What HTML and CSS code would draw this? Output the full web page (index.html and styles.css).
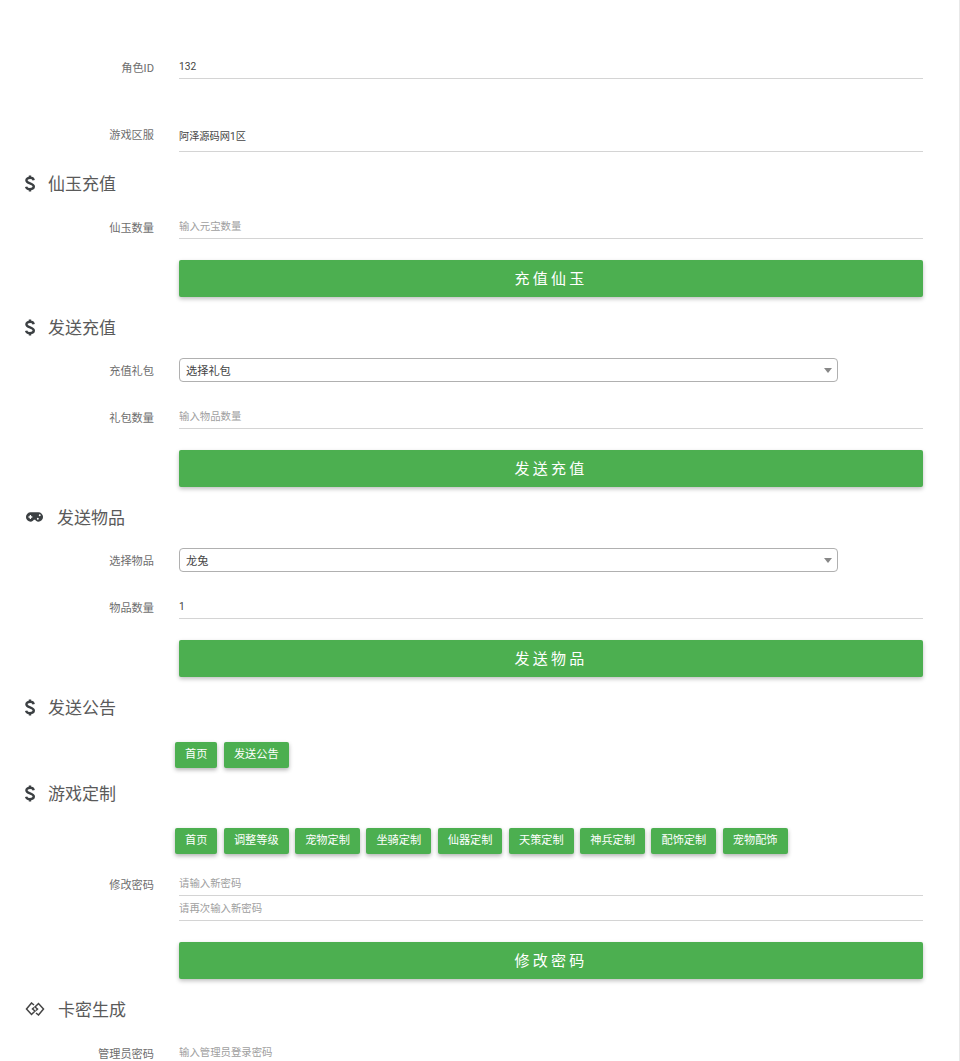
FILE: index.html
```html
<!DOCTYPE html>
<html lang="zh">
<head>
<meta charset="utf-8">
<title>GM</title>
<link rel="stylesheet" href="styles.css">
</head>
<body>
<svg class="defs" aria-hidden="true"><defs><symbol id="dollar" viewBox="0 0 10 17"><path d="M8.700 5.200C8.400 3.500 7 2.800 5 2.800 3 2.800 1.400 3.700 1.400 5.200c0 3.700 7.400 2.500 7.400 6.400 0 1.700-1.700 2.600-3.800 2.600-2.100 0-3.600-.8-3.900-2.500M5 .5v2.300M5 14.200v2.300"/></symbol></defs></svg>
<main class="page">
  <div class="row row-first"><label class="lbl">角色ID</label><div class="field"><span class="val">132</span></div></div>
  <div class="row row-zone"><label class="lbl">游戏区服</label><div class="field tall"><span class="val">阿泽源码网1区</span></div></div>

  <h3 class="head"><svg class="ic ic-dollar"><use href="#dollar"/></svg><span>仙玉充值</span></h3>
  <div class="row"><label class="lbl">仙玉数量</label><div class="field"><span class="ph">输入元宝数量</span></div></div>
  <button class="btn-wide">充值仙玉</button>

  <h3 class="head"><svg class="ic ic-dollar"><use href="#dollar"/></svg><span>发送充值</span></h3>
  <div class="row-select"><label class="lbl">充值礼包</label><div class="select"><span>选择礼包</span><i class="caret"></i></div></div>
  <div class="row row-after"><label class="lbl">礼包数量</label><div class="field"><span class="ph">输入物品数量</span></div></div>
  <button class="btn-wide">发送充值</button>

  <h3 class="head"><svg class="ic ic-pad" viewBox="0 0 20 12"><path fill-rule="evenodd" d="M6 1h8a5 5 0 0 1 0 10c-1.700 0-2.500-1-3.300-2H9.300C8.500 10 7.700 11 6 11A5 5 0 0 1 6 1zM5 4v1.300H3.700v1.400H5V8h1.400V6.700h1.300V5.300H6.400V4zm8.500 2.800a1 1 0 1 0 0 2 1 1 0 0 0 0-2zm2-3.600a1 1 0 1 0 0 2 1 1 0 0 0 0-2z"/></svg><span>发送物品</span></h3>
  <div class="row-select"><label class="lbl">选择物品</label><div class="select"><span>龙兔</span><i class="caret"></i></div></div>
  <div class="row row-after"><label class="lbl">物品数量</label><div class="field"><span class="val">1</span></div></div>
  <button class="btn-wide">发送物品</button>

  <h3 class="head"><svg class="ic ic-dollar"><use href="#dollar"/></svg><span>发送公告</span></h3>
  <nav class="btns"><a class="btn">首页</a><a class="btn">发送公告</a></nav>

  <h3 class="head head-tight"><svg class="ic ic-dollar"><use href="#dollar"/></svg><span>游戏定制</span></h3>
  <nav class="btns"><a class="btn">首页</a><a class="btn">调整等级</a><a class="btn">宠物定制</a><a class="btn">坐骑定制</a><a class="btn">仙器定制</a><a class="btn">天策定制</a><a class="btn">神兵定制</a><a class="btn">配饰定制</a><a class="btn">宠物配饰</a></nav>

  <div class="row row-pw"><label class="lbl">修改密码</label><div class="stack"><div class="field"><span class="ph">请输入新密码</span></div><div class="field"><span class="ph">请再次输入新密码</span></div></div></div>
  <button class="btn-wide">修改密码</button>

  <h3 class="head"><svg class="ic ic-link" viewBox="0 0 20 14"><path d="M9 3L6.500 1 1.500 7l5 5.500 3.500-3.500L7.500 7 9 5.500M11 11l2.500 2 5-6-5-5.500L10 5l2.500 2L11 8.500"/></svg><span>卡密生成</span></h3>
  <div class="row"><label class="lbl">管理员密码</label><div class="field"><span class="ph">输入管理员登录密码</span></div></div>
</main>
</body>
</html>
```
FILE: styles.css
```css
html, body { margin: 0; padding: 0; height: 1061px; overflow: hidden; background: #fff; }
body { font-family: Roboto, "Noto Sans CJK SC", sans-serif; color: #555; font-size: 10px; }
.defs { display: none; }
.page { width: 960px; height: 1061px; overflow: hidden; box-sizing: border-box; border-right: 1px solid #e8e8e8; padding-top: 57px; }
.row, .row-select { display: flex; align-items: flex-start; }
.lbl { width: 154px; text-align: right; font-size: 11.200px; line-height: 16px; color: #6e6e6e; flex: none; }
.row .lbl { padding-top: 4px; }
.row-select .lbl { padding-top: 3px; }
.field { margin-left: 25px; width: 744px; height: 22px; box-sizing: border-box; border-bottom: 1px solid #d4d4d4; line-height: 20px; }
.tall { height: 28px; line-height: 25px; }
.row-first { margin-bottom: 45px; }
.val { font-size: 10.200px; color: #444; }
.ph { font-size: 10.400px; color: #a0a0a0; }
.head { display: flex; align-items: center; height: 24px; margin: 19px 0 0 25px; font-weight: 400; font-size: 17px; color: #5a5a5a; }
.head span { margin: 0 0 2px 13px; }
.head + .row { margin-top: 22px; }
.ic { flex: none; }
.ic-dollar { width: 10px; height: 17px; fill: none; stroke: #3c4043; stroke-width: 2.400; }
.ic-pad { width: 19px; height: 12px; fill: #3c4043; }
.ic-link { width: 20px; height: 14px; fill: none; stroke: #444; stroke-width: 1.500; }
.btn-wide { display: block; margin: 21px 0 -1px 179px; width: 744px; height: 37px; padding: 0 0 2px; border: 0; border-radius: 2px; background: #4caf50; color: #fff; font: 15px Roboto, "Noto Sans CJK SC", sans-serif; letter-spacing: 3.200px; box-shadow: 0 2px 4px rgba(0,0,0,.25); }
.select { margin-left: 25px; width: 659px; height: 24px; box-sizing: border-box; border: 1px solid #b0b0b0; border-radius: 4px; padding: 0 5px 0 6px; display: flex; align-items: center; justify-content: space-between; font-size: 11.200px; color: #444; }
.caret { width: 0; height: 0; border: 4px solid transparent; border-top: 5px solid #888; border-bottom: 0; }
.row-select { margin-top: 19px; align-items: center; }
.row-after { margin-top: 25px; }
.btns { display: flex; gap: 6.500px; margin: 23px 0 0 175px; }
.btn { height: 26px; padding: 0 10px; line-height: 26px; background: #4caf50; color: #fff; font-size: 11.200px; border-radius: 2px; box-shadow: 0 2px 4px rgba(0,0,0,.3); }
.head-tight { margin-top: 13px; }
.row-pw { margin-top: 20px; }
.stack { display: flex; flex-direction: column; gap: 3px; }
```
